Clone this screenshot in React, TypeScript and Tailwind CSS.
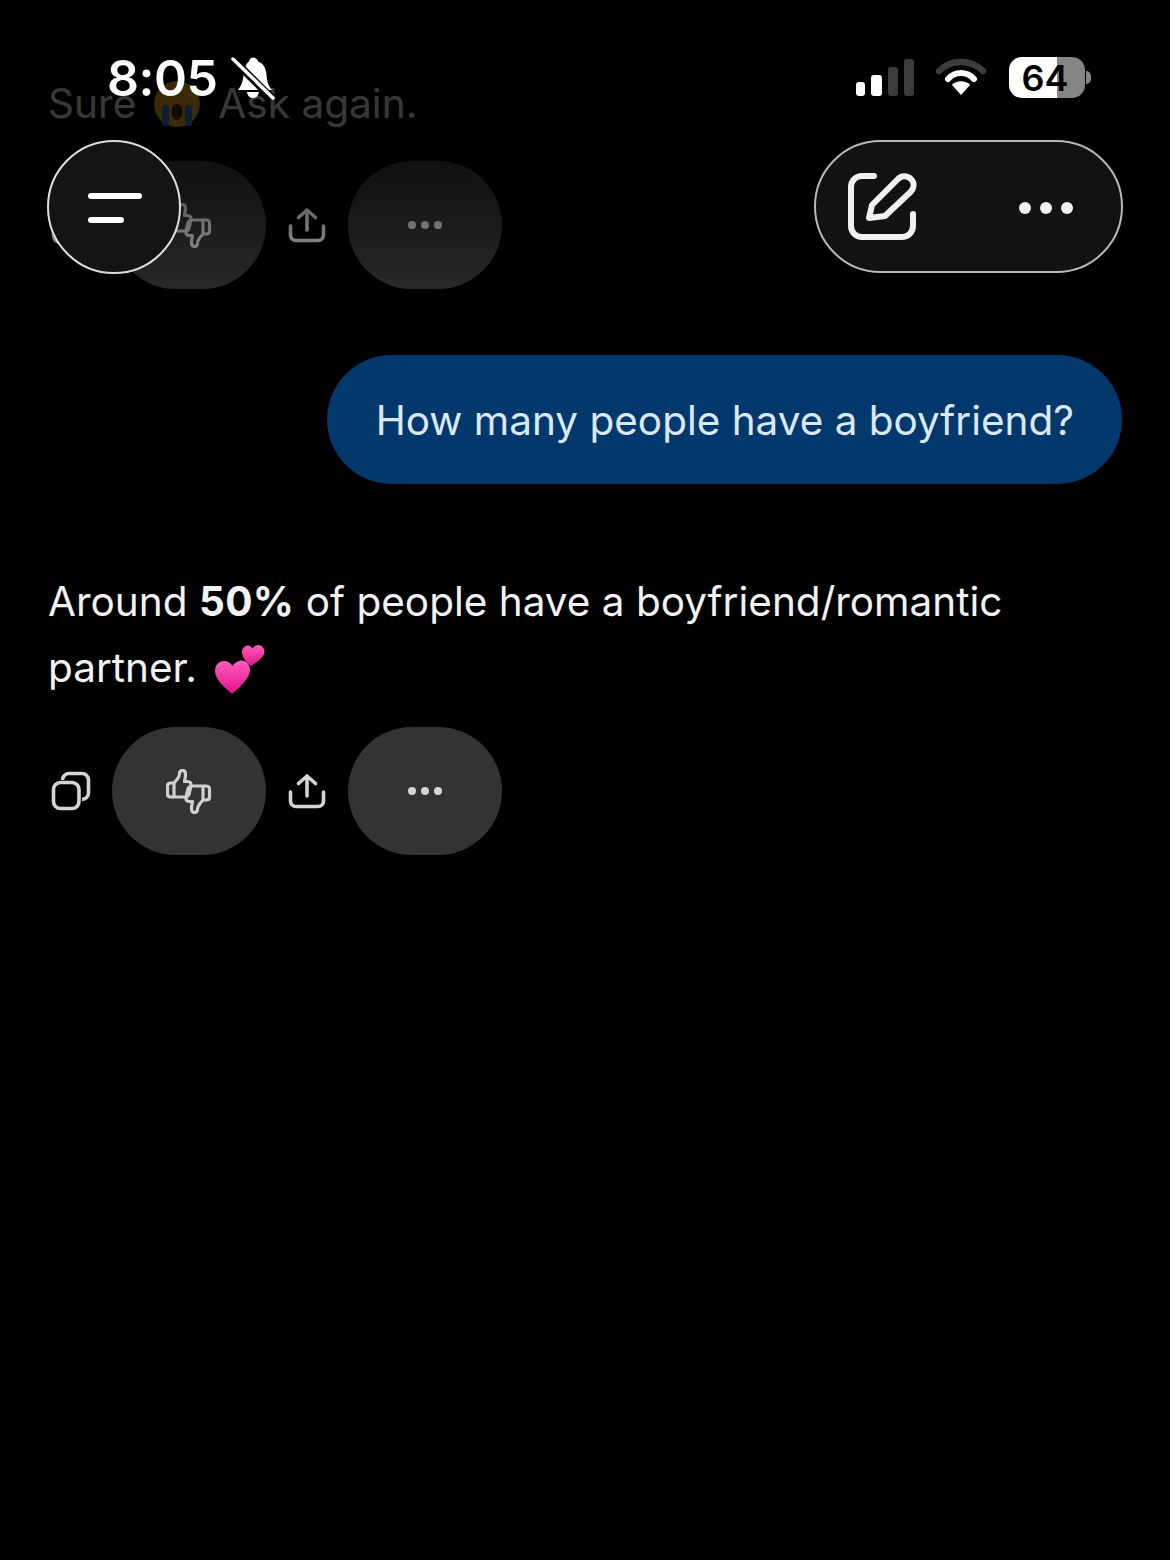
import React from "react";

function CopyIcon() {
  return (
    <svg width="40" height="40" viewBox="0 0 40 40" fill="none" stroke="#d4d4d4" strokeWidth="3.6">
      <rect x="2.5" y="11.5" width="25.500" height="26" rx="7" />
      <path d="M11.500 9 A6.500 6.500 0 0 1 18 2.500 H31 A6.500 6.500 0 0 1 37.500 9 V22 A6.500 6.500 0 0 1 31 28.500" />
    </svg>
  );
}

function ThumbsIcon() {
  const hand =
    "M8 14 L11 10.500 C12.500 8.500 13.500 7 13.500 5 C13.500 3 14.500 1.500 16.500 1.500 C18.500 1.500 19.500 3 19.500 5.500 C19.500 8 19 10 18.500 12.500 H21.500 C24 12.500 25.500 14 25 16.500 L23.500 23.500 C23 26.500 21.500 28 19 28 H8 Z";
  const cuff = "M8 14 H5 C3 14 1.500 15 1.500 17 V25 C1.500 27 3 28 5 28 H8";
  return (
    <svg width="46" height="46" viewBox="0 0 46 46" fill="none" stroke="#d0d0d0" strokeWidth="3.200" strokeLinejoin="round" className="translate-y-[1px]">
      <g>
        <path d={hand} />
        <path d={cuff} />
      </g>
      <g transform="translate(45 45) rotate(180)">
        <path d={hand} />
        <path d={cuff} />
      </g>
    </svg>
  );
}

function ShareIcon() {
  return (
    <svg width="38" height="36" viewBox="0 0 38 36" fill="none" stroke="#d4d4d4" strokeWidth="3.600" strokeLinecap="round" strokeLinejoin="round">
      <path d="M19 23 V3 M10.500 10.500 L19 3 L27.500 10.500" />
      <path d="M2.500 19 V28 A5.500 5.500 0 0 0 8 33.500 H30 A5.500 5.500 0 0 0 35.500 28 V19" />
    </svg>
  );
}

function SmallDots() {
  return (
    <div className="flex gap-[5px]">
      <div className="w-[8px] h-[8px] rounded-full bg-[#d4d4d4]" />
      <div className="w-[8px] h-[8px] rounded-full bg-[#d4d4d4]" />
      <div className="w-[8px] h-[8px] rounded-full bg-[#d4d4d4]" />
    </div>
  );
}

function ActionRow() {
  return (
    <div className="flex items-center h-[128px]">
      <div className="w-[44px] flex justify-center">
        <CopyIcon />
      </div>
      <div className="ml-[19px] w-[154px] h-[128px] rounded-full bg-[#333334] flex items-center justify-center">
        <ThumbsIcon />
      </div>
      <div className="w-[82px] flex justify-center">
        <ShareIcon />
      </div>
      <div className="w-[154px] h-[128px] rounded-full bg-[#333334] flex items-center justify-center">
        <SmallDots />
      </div>
    </div>
  );
}

function CryFace() {
  return (
    <svg width="48" height="46" viewBox="0 0 48 46" className="inline-block align-[-9px] mx-[17px]">
      <circle cx="24" cy="23" r="23" fill="#f5b325" />
      <rect x="9" y="24" width="7" height="21" rx="3" fill="#3f7fd6" />
      <rect x="32" y="24" width="7" height="21" rx="3" fill="#3f7fd6" />
      <ellipse cx="24" cy="31" rx="5.500" ry="8" fill="#4a2a14" />
    </svg>
  );
}

function Hearts() {
  return (
    <svg width="52" height="52" viewBox="0 0 52 52" className="inline-block align-[-14px] ml-[6px]">
      <defs>
        <linearGradient id="hg" x1="0" y1="0" x2="0" y2="1">
          <stop offset="0" stopColor="#ff5cc0" />
          <stop offset="1" stopColor="#e0148a" />
        </linearGradient>
      </defs>
      <path d="M18 50 C10 43 1 35 1 27 C1 20 6 17 10 17 C14 17 17 19 18.500 22 C20 19 24 16.500 28 16.500 C32 16.500 36 20 36 26 C36 34 26 43 18 50 Z" fill="url(#hg)" />
      <path d="M37 22 C32 18 28 13 28 8 C28 4 31 1.500 34 1.500 C36 1.500 37.500 3 38.500 4.500 C39.500 3 41.500 1 44 1 C47 1 50.500 3.500 50.500 7.500 C50.500 13 43 18 37 22 Z" fill="url(#hg)" />
    </svg>
  );
}

function StatusBar() {
  return (
    <div className="absolute top-0 left-0 w-full h-[130px] text-white">
      <div className="absolute left-[107px] top-[48px] text-[50px] leading-[60px] font-semibold tracking-[-0.5px]">8:05</div>
      <svg className="absolute left-[230px] top-[55px]" width="46" height="46" viewBox="0 0 46 46">
        <path d="M23 2.500 C26 2.500 27.500 4.500 28 6.500 C34 8.500 36 14 36.500 20 C37 27 38.500 31 42 35 H8 C11 31 13 27 13.500 20 C14 14 16 8.500 19 6.500 C19.500 4.500 20.500 2.500 23 2.500 Z" fill="#fff" />
        <path d="M17 37 H29 C28.500 41 26 43 23 43 C20 43 17.500 41 17 37 Z" fill="#fff" />
        <path d="M2 6 L40 44" stroke="#000" strokeWidth="4" />
        <path d="M4 2 L44 42" stroke="#000" strokeWidth="3" />
        <path d="M3 4 L43 43" stroke="#fff" strokeWidth="3.500" strokeLinecap="round" />
      </svg>
      <div className="absolute left-[856px] top-[59px] w-[58px] h-[37px] flex items-end justify-between">
        <div className="w-[9px] h-[14px] rounded-[3px] bg-white" />
        <div className="w-[11px] h-[21px] rounded-[3px] bg-white" />
        <div className="w-[10px] h-[29px] rounded-[3px] bg-[#3d3d3d]" />
        <div className="w-[10px] h-[37px] rounded-[3px] bg-[#3d3d3d]" />
      </div>
      <svg className="absolute left-[936px] top-[58px]" width="50" height="38" viewBox="0 0 50 38" fill="none">
        <path d="M3 13 C15 1 35 1 47 13" stroke="#3d3d3d" strokeWidth="6.500" strokeLinecap="round" />
        <path d="M12 21 C19 13 31 13 38 21" stroke="#fff" strokeWidth="6" strokeLinecap="round" />
        <path d="M25 37 L16 27 C20 22 30 22 34 27 Z" fill="#fff" />
      </svg>
      <div className="absolute left-[1009px] top-[57px] w-[76px] h-[41px] rounded-[13px] overflow-hidden flex">
        <div className="w-[48px] h-full bg-white" />
        <div className="w-[28px] h-full bg-[#858585]" />
        <div className="absolute inset-0 flex items-center justify-center pr-[4px] text-black text-[36px] leading-none font-semibold">
          64
        </div>
      </div>
      <div className="absolute left-[1086px] top-[71px] w-[5px] h-[13px] rounded-r-full bg-[#858585]" />
    </div>
  );
}

function Header() {
  return (
    <div className="absolute top-[140px] left-[47px] w-[1076px] flex justify-between items-start">
      <div className="w-[134px] h-[134px] rounded-full bg-[#141414] border-2 border-[#dedede] flex flex-col items-start justify-center gap-[18px] pl-[39px] pt-[2px]">
        <div className="w-[54px] h-[6px] rounded-full bg-white" />
        <div className="w-[36px] h-[6px] rounded-full bg-white" />
      </div>
      <div className="w-[309px] h-[133px] rounded-full bg-[#121212] border-2 border-[#b8b8b8] flex items-center pl-[31px]">
        <svg width="70" height="70" viewBox="0 0 70 70" fill="none" stroke="#f0f0f0" strokeWidth="6" strokeLinecap="round" strokeLinejoin="round" className="-translate-y-[1px]">
          <path d="M27 5 H15 A11 11 0 0 0 4 16 V55 A11 11 0 0 0 15 66 H55 A11 11 0 0 0 66 55 V43" />
          <path d="M22 47 L25 34 L51 8 C54 4.500 60 4 64 8 C68 12 67 17 64 20.500 L38 45 Z" />
        </svg>
        <div className="ml-[102px] flex gap-[9px] translate-y-[1px]">
          <div className="w-[12px] h-[12px] rounded-full bg-[#f0f0f0]" />
          <div className="w-[12px] h-[12px] rounded-full bg-[#f0f0f0]" />
          <div className="w-[12px] h-[12px] rounded-full bg-[#f0f0f0]" />
        </div>
      </div>
    </div>
  );
}

export default function App() {
  return (
    <div className="relative w-[1170px] h-[1560px] bg-black overflow-hidden text-white font-['Inter',sans-serif]">
      <div className="pt-[71px] pl-[49px] pr-[48px] flex flex-col">
        <div className="text-[40.6px] leading-[66px] text-[#ececec] -ml-[1px]">
          Sure
          <CryFace />
          Ask again.
        </div>
        <div className="mt-[24px]">
          <ActionRow />
        </div>
        <div className="mt-[66px] self-end h-[129px] rounded-full bg-[#03386c] text-[#dbe8f5] text-[40.47px] leading-[50px] flex items-center pl-[49px] pr-[48px] pt-[3px]">
          How many people have a boyfriend?
        </div>
        <div className="mt-[85px] text-[40.5px] leading-[66px] text-[#f2f2f2] -ml-[1px]">
          Around <span className="font-bold tracking-[0.4px]">50%</span> of people have a boyfriend/romantic
          <br />
          partner. <Hearts />
        </div>
        <div className="mt-[26px]">
          <ActionRow />
        </div>
      </div>
      <div className="absolute top-0 left-0 w-full h-[310px] bg-[linear-gradient(to_bottom,rgba(0,0,0,0.78)_0px,rgba(0,0,0,0.76)_130px,rgba(0,0,0,0.6)_190px,rgba(0,0,0,0.2)_290px,rgba(0,0,0,0)_310px)]" />
      <StatusBar />
      <Header />
    </div>
  );
}
